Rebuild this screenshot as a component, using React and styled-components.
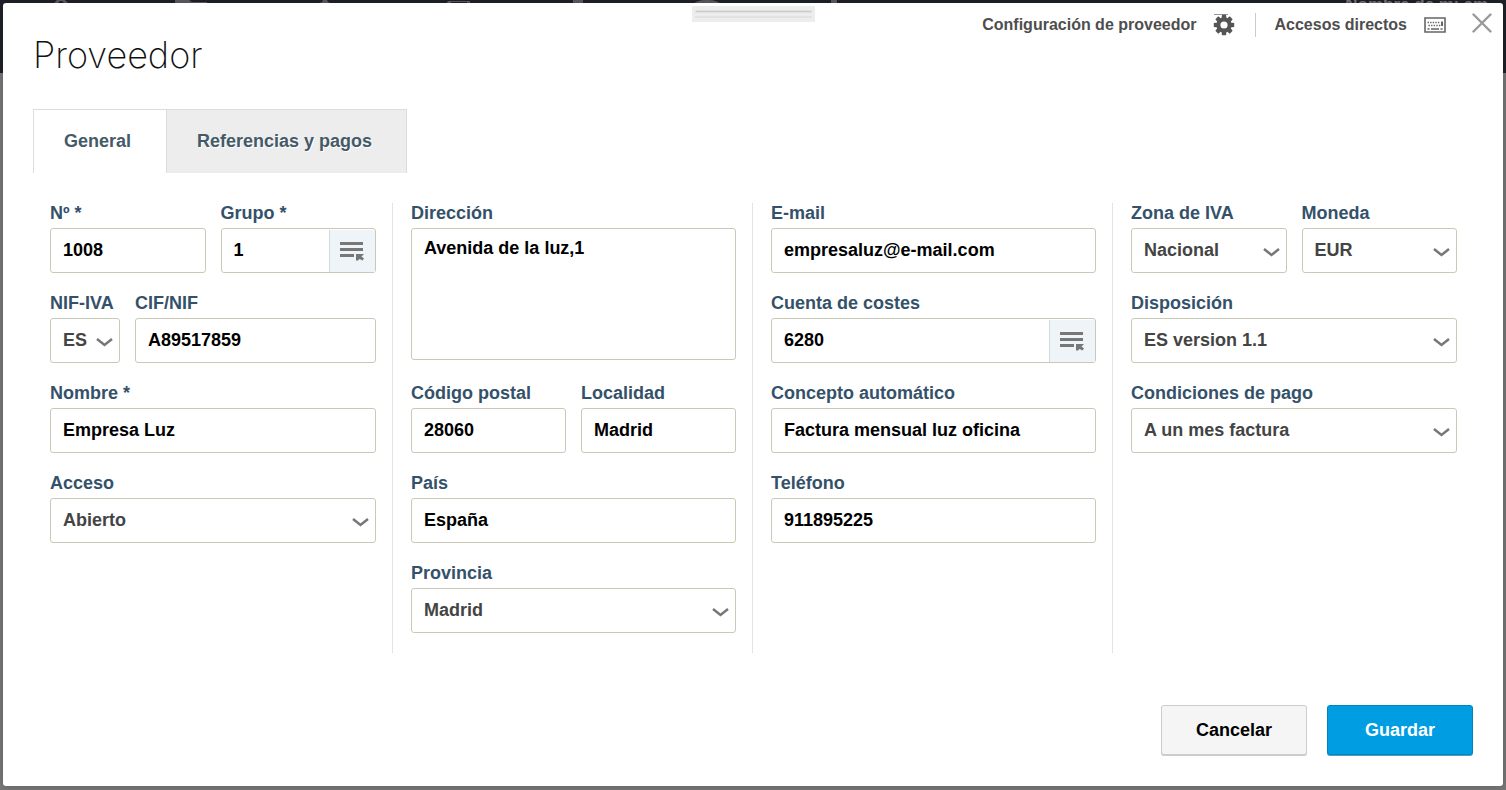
import React from 'react';
import styled, { createGlobalStyle } from 'styled-components';

const App = () => {
  return (
    <Page>
      <GlobalStyle />
      <Backdrop aria-hidden="true">
        <BackdropIcons viewBox="0 0 860 4">
          <path d="M53 4l4-4h8l4 4h-4l-3-3h-2l-3 3z" />
          <path d="M175 0h14l3 2h15v2h-32z" />
          <path d="M317 4l5-2 1-2h4l1 2 5 2z" />
          <path d="M446 4l2-3h22v3h-3v-2h-16v2z" />
          <path d="M573 0h10v4h-10z" />
          <ellipse cx="707" cy="5" rx="14" ry="5" />
          <path d="M831 0h6v4h-6z" />
        </BackdropIcons>
        <Company>Nombre de mi em</Company>
      </Backdrop>
      <Modal role="dialog" aria-labelledby="title">
        <Header>
          <Title id="title">Proveedor</Title>
          <Handle>
            <Grip />
            <Grip />
          </Handle>
          <Actions>
            <Action type="button">
              Configuración de proveedor
              <GearIcon />
            </Action>
            <Divider />
            <Action type="button">
              Accesos directos
              <KeyboardIcon />
            </Action>
            <Close type="button" aria-label="Cerrar">
              <svg width="20" height="20" viewBox="0 0 20 20">
                <path d="M1.500 1.500l17 17M18.500 1.500l-17 17" stroke="#999" strokeWidth="2.400" strokeLinecap="round" />
              </svg>
            </Close>
          </Actions>
        </Header>

        <Tabs role="tablist">
          <Tab type="button" role="tab" aria-selected="true" $active>
            General
          </Tab>
          <Tab type="button" role="tab" aria-selected="false">
            Referencias y pagos
          </Tab>
        </Tabs>

        <form onSubmit={(e) => e.preventDefault()}>
          <Columns>
            <Column>
              <Row>
                <TextField id="numero" label="Nº *" value="1008" />
                <TextField id="grupo" label="Grupo *" value="1" lookup />
              </Row>
              <Row>
                <SelectField id="nifIva" label="NIF-IVA" value="ES" width="70px" />
                <TextField id="cif" label="CIF/NIF" value="A89517859" />
              </Row>
              <Row>
                <TextField id="nombre" label="Nombre *" value="Empresa Luz" />
              </Row>
              <Row>
                <SelectField id="acceso" label="Acceso" value="Abierto" />
              </Row>
            </Column>
            <Column>
              <Row $tall>
                <Field>
                  <Label htmlFor="direccion">Dirección</Label>
                  <TextArea id="direccion" defaultValue="Avenida de la luz,1" spellCheck={false} />
                </Field>
              </Row>
              <Row>
                <TextField id="cp" label="Código postal" value="28060" />
                <TextField id="localidad" label="Localidad" value="Madrid" />
              </Row>
              <Row>
                <TextField id="pais" label="País" value="España" />
              </Row>
              <Row>
                <SelectField id="provincia" label="Provincia" value="Madrid" />
              </Row>
            </Column>
            <Column>
              <Row>
                <TextField id="email" label="E-mail" value="empresaluz@e-mail.com" />
              </Row>
              <Row>
                <TextField id="cuenta" label="Cuenta de costes" value="6280" lookup />
              </Row>
              <Row>
                <TextField id="concepto" label="Concepto automático" value="Factura mensual luz oficina" />
              </Row>
              <Row>
                <TextField id="telefono" label="Teléfono" value="911895225" />
              </Row>
            </Column>
            <Column>
              <Row>
                <SelectField id="zona" label="Zona de IVA" value="Nacional" />
                <SelectField id="moneda" label="Moneda" value="EUR" />
              </Row>
              <Row>
                <SelectField id="disposicion" label="Disposición" value="ES version 1.1" />
              </Row>
              <Row>
                <SelectField id="condiciones" label="Condiciones de pago" value="A un mes factura" />
              </Row>
            </Column>
          </Columns>
          <Footer>
            <Button type="button">Cancelar</Button>
            <Button type="submit" $primary>
              Guardar
            </Button>
          </Footer>
        </form>
      </Modal>
    </Page>
  );
};

export default App;

const TextField = ({ id, label, value, lookup }) => (
  <Field>
    <Label htmlFor={id}>{label}</Label>
    <Box>
      <Input id={id} type="text" defaultValue={value} />
      {lookup && (
        <Lookup type="button" aria-label={`Buscar ${label}`}>
          <ListIcon />
        </Lookup>
      )}
    </Box>
  </Field>
);

const SelectField = ({ id, label, value, width }) => (
  <Field $width={width}>
    <Label htmlFor={id}>{label}</Label>
    <SelectBox>
      <Select id={id} defaultValue={value}>
        <option>{value}</option>
      </Select>
      <Chevron viewBox="0 0 17 10">
        <path d="M1 2L8.500 8L16 2" />
      </Chevron>
    </SelectBox>
  </Field>
);

const ListIcon = () => (
  <svg width="26" height="20" viewBox="0 0 26 20" fill="#777">
    <path d="M1 1h23v3H1zM1 7h23v3H1zM1 13h14v3H1z" />
    <path d="M17 13h8l-2.500 2.500 2.500 2-1.500 2-3-1.500-1.500 1.500h-2z" />
  </svg>
);

const GearIcon = () => (
  <svg width="22" height="22" viewBox="0 0 22 22">
    <path d="M1 .5h14" stroke="#999" />
    <g fill="#555">
      {[0, 45, 90, 135].map((angle) => (
        <path key={angle} d="M9 .8h4l.6 4.200h-5.200zM9 21.200h4l.6-4.200h-5.200z" transform={`rotate(${angle} 11 11)`} />
      ))}
    </g>
    <circle cx="11" cy="11" r="5.600" fill="none" stroke="#555" strokeWidth="4" />
  </svg>
);

const KeyboardIcon = () => (
  <svg width="22" height="16" viewBox="0 0 22 16" fill="none" stroke="#666">
    <path d="M1 1h20v14H1z" strokeWidth="1.600" />
    <path d="M3.500 5.500h12M4.500 8.500h12" strokeWidth="1.600" strokeDasharray="1.400 1.200" />
    <path d="M18 4.500v4.500" strokeWidth="2" />
    <path d="M3.500 12h2M7 12h8M16.500 12h2" strokeWidth="2" stroke="#888" />
  </svg>
);

const GlobalStyle = createGlobalStyle`
  * {
    box-sizing: border-box;
  }
  body {
    margin: 0;
    background: #777;
    font-family: 'Liberation Sans', Arial, sans-serif;
    font-size: 18px;
    font-weight: bold;
  }
  button, input, select, textarea {
    margin: 0;
    font: inherit;
  }
`;

const Page = styled.div`
  position: relative;
  min-height: 100vh;
  padding: 3px 3px 4px;
`;

const Backdrop = styled.div`
  position: absolute;
  top: 0;
  left: 0;
  right: 0;
  height: 73px;
  display: flex;
  justify-content: space-between;
  align-items: flex-start;
  padding-right: 18px;
  background: #1f2129;
`;

const BackdropIcons = styled.svg`
  width: 860px;
  height: 4px;
  fill: #5d5c60;
`;

const Company = styled.span`
  margin-top: -5px;
  font-size: 17px;
  line-height: 20px;
  color: #77777b;
`;

const Modal = styled.main`
  position: relative;
  padding: 0 30px 31px;
  border-radius: 3px;
  background: #fff;
  box-shadow: 0 0 8px rgba(0, 0, 0, 0.2);
`;

const Header = styled.header`
  display: grid;
  grid-template-columns: 1fr 123px 1fr;
  height: 106px;
  margin: 0 -19px;
`;

const Title = styled.h1`
  margin: 0;
  padding: 30px 0 0 19px;
  font-family: Inter, 'Open Sans', sans-serif;
  font-size: 36px;
  font-weight: 200;
  line-height: 44px;
  color: #111;
`;

const Handle = styled.div`
  display: flex;
  flex-direction: column;
  gap: 3px;
  height: 16px;
  margin-top: 3px;
  padding: 4px 3px;
  background: #ededed;
`;

const Grip = styled.span`
  height: 3px;
  border: 1px solid #e2e2e2;
  background: #ccc;
`;

const Actions = styled.div`
  display: flex;
  align-items: center;
  justify-content: flex-end;
  height: 44px;
  white-space: nowrap;
`;

const Action = styled.button`
  display: flex;
  align-items: center;
  gap: 17px;
  padding: 0;
  border: 0;
  background: none;
  color: #4e4e4e;
  font-size: 16px;
  line-height: 24px;
`;

const Divider = styled.span`
  width: 1px;
  height: 24px;
  margin: 0 18px 0 20px;
  background: #ccc;
`;

const Close = styled.button`
  display: flex;
  margin: 0 0 5px 26px;
  padding: 0;
  border: 0;
  background: none;
`;

const Tabs = styled.div`
  display: flex;
  height: 64px;
`;

const Tab = styled.button`
  padding: 0 35px 0 30px;
  border: 1px solid #dcdcdc;
  border-width: 1px 0 0 1px;
  background: ${({ $active }) => ($active ? '#fff' : '#ededed')};
  color: #455a68;
  text-shadow: 1px 1px 0 #fff;
  &:last-child {
    padding-right: 34px;
    border-right-width: 1px;
  }
`;

const Columns = styled.div`
  display: grid;
  grid-template-columns: repeat(4, minmax(0, 1fr));
  margin-top: 30px;
`;

const Column = styled.div`
  padding: 0 16px 0 18px;
  border-right: 1px solid #e3e3e3;
  &:first-child {
    padding-left: 17px;
  }
  &:last-child {
    border-right: 0;
  }
`;

const Row = styled.div`
  display: flex;
  gap: 15px;
  height: ${({ $tall }) => ($tall ? '180px' : '90px')};
`;

const Field = styled.div`
  display: flex;
  flex-direction: column;
  flex: ${({ $width }) => ($width ? `0 0 ${$width}` : '1 1 0')};
  min-width: 0;
`;

const Label = styled.label`
  height: 25px;
  line-height: 20px;
  white-space: nowrap;
  color: #34516a;
`;

const Box = styled.div`
  display: flex;
  height: 45px;
  border: 1px solid #c9cab6;
  border-radius: 3px;
  background: #fff;
`;

const Input = styled.input`
  flex: 1;
  width: 0;
  min-width: 0;
  padding: 0 12px;
  border: 0;
  outline: 0;
  background: none;
  color: #000;
`;

const TextArea = styled.textarea`
  height: 132px;
  padding: 8px 12px;
  border: 1px solid #c9cab6;
  border-radius: 3px;
  outline: 0;
  resize: none;
  line-height: 22px;
  color: #000;
`;

const Lookup = styled.button`
  display: flex;
  align-items: center;
  justify-content: center;
  width: 46px;
  margin: 1px 0 0;
  padding: 0 2px 0 0;
  border: 0;
  border-left: 1px solid #d5dadd;
  background: #eef4f7;
`;

const SelectBox = styled(Box)`
  display: grid;
  align-items: center;
`;

const Select = styled.select`
  grid-area: 1 / 1;
  width: 100%;
  height: 43px;
  padding: 0 0 2px 12px;
  border: 0;
  outline: 0;
  appearance: none;
  background: none;
  color: #444;
`;

const Chevron = styled.svg`
  grid-area: 1 / 1;
  justify-self: end;
  width: 17px;
  height: 10px;
  margin: 3px 6px 0 0;
  fill: none;
  stroke: #777;
  stroke-width: 2.5;
  pointer-events: none;
`;

const Footer = styled.footer`
  display: flex;
  justify-content: flex-end;
  gap: 20px;
  margin-top: 52px;
`;

const Button = styled.button`
  width: 146px;
  height: 50px;
  padding: 0;
  border: 1px solid ${({ $primary }) => ($primary ? '#0084bd' : '#ccc')};
  border-radius: 3px;
  background: ${({ $primary }) => ($primary ? '#009de3' : '#f5f5f5')};
  box-shadow: 0 1px 0 ${({ $primary }) => ($primary ? '#4d9fc4' : '#ccc')};
  color: ${({ $primary }) => ($primary ? '#fff' : '#000')};
`;
